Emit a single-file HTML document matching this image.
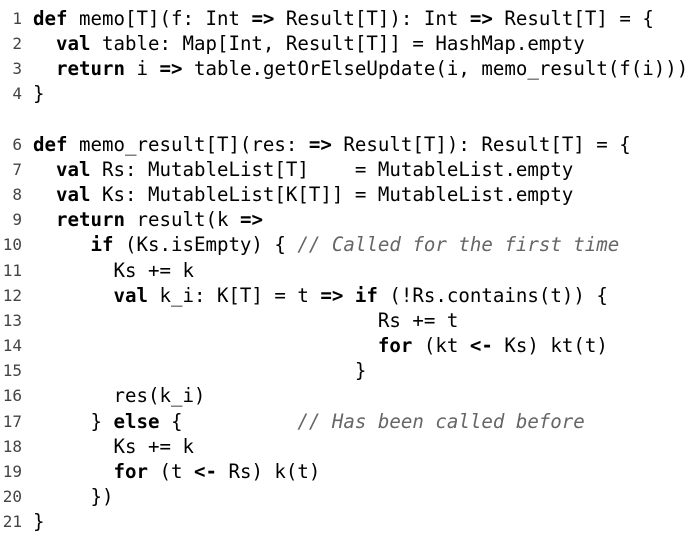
<!DOCTYPE html>
<html><head><meta charset="utf-8"><style>
html,body{margin:0;background:#fff;width:693px;height:540px;overflow:hidden}
pre{position:absolute;left:33px;top:6px;margin:0;font-family:"DejaVu Sans Mono",monospace;font-size:19.1px;line-height:25.15px;color:#000}
.n{position:absolute;left:0;top:6px;width:22px;text-align:right;font-family:"DejaVu Sans Mono",monospace;font-size:16px;line-height:25.15px;color:#444;margin:0}
b{font-weight:bold}
i{color:#666;font-style:italic}
</style></head><body>
<pre class="n">1
2
3
4

6
7
8
9
10
11
12
13
14
15
16
17
18
19
20
21</pre>
<pre><b>def</b> memo[T](f: Int <b>=&gt;</b> Result[T]): Int <b>=&gt;</b> Result[T] = {
  <b>val</b> table: Map[Int, Result[T]] = HashMap.empty
  <b>return</b> i <b>=&gt;</b> table.getOrElseUpdate(i, memo_result(f(i)))
}

<b>def</b> memo_result[T](res: <b>=&gt;</b> Result[T]): Result[T] = {
  <b>val</b> Rs: MutableList[T]    = MutableList.empty
  <b>val</b> Ks: MutableList[K[T]] = MutableList.empty
  <b>return</b> result(k <b>=&gt;</b>
     <b>if</b> (Ks.isEmpty) { <i>// Called for the first time</i>
       Ks += k
       <b>val</b> k_i: K[T] = t <b>=&gt;</b> <b>if</b> (!Rs.contains(t)) {
                              Rs += t
                              <b>for</b> (kt <b>&lt;-</b> Ks) kt(t)
                            }
       res(k_i)
     } <b>else</b> {          <i>// Has been called before</i>
       Ks += k
       <b>for</b> (t <b>&lt;-</b> Rs) k(t)
     })
}</pre>
</body></html>
